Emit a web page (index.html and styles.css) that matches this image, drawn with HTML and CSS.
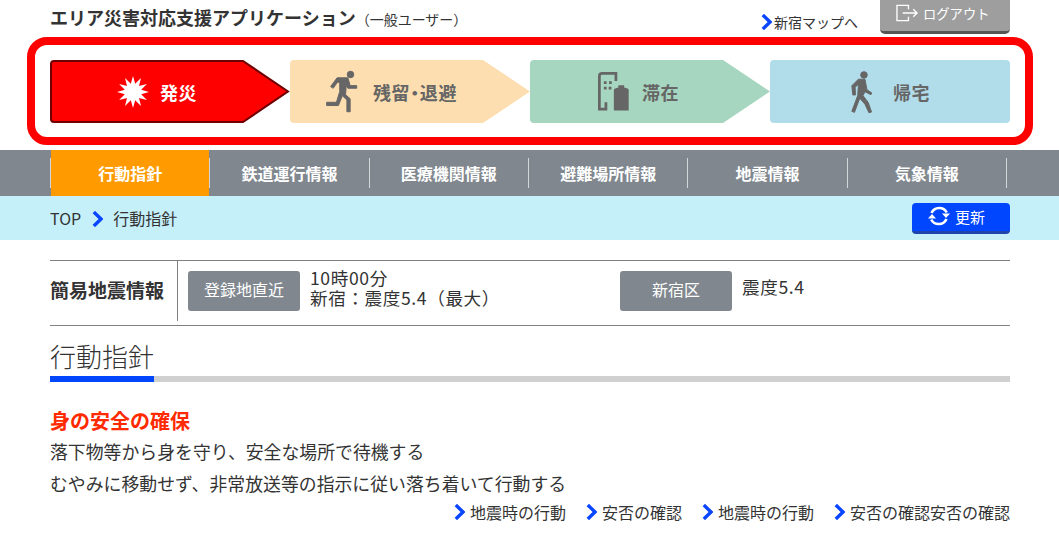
FILE: index.html
```html
<!DOCTYPE html>
<html lang="ja">
<head>
<meta charset="utf-8">
<title>エリア災害対応支援アプリケーション</title>
<link rel="stylesheet" href="styles.css">
</head>
<body>
<svg class="defs" width="0" height="0" aria-hidden="true">
  <symbol id="chev" viewBox="0 0 11 16"><path d="M1.800 1 9 8 1.800 15" fill="none" stroke="#0a46ff" stroke-width="3.400"/></symbol>
</svg>

<header class="top">
  <h1 class="title">エリア災害対応支援アプリケーション<small class="role">（一般ユーザー）</small></h1>
  <a class="map-link"><svg class="chev"><use href="#chev"/></svg>新宿マップへ</a>
  <a class="logout">
    <svg class="logout-icon" viewBox="0 0 24 18" fill="none" stroke="#fff" stroke-width="1.400"><path d="M13 5V1H1v16h12v-4"/><path d="M7 9h15M18 5l4 4-4 4"/></svg>
    ログアウト
  </a>
</header>

<section class="phases">
  <div class="phase phase-1">
    <svg class="shape" viewBox="0 0 240 63"><path d="M4 1H193L238 31.500 193 62H4Q1 62 1 59V4Q1 1 4 1Z" fill="#ff0000" stroke="#6e0000" stroke-width="2"/></svg>
    <svg class="ic-burst" viewBox="-16 -16 32 32"><polygon fill="#fff" points="16,0 8.200,2.200 13.900,8 6,6 8,13.900 2.200,8.200 0,16 -2.200,8.200 -8,13.900 -6,6 -13.900,8 -8.200,2.200 -16,0 -8.200,-2.200 -13.900,-8 -6,-6 -8,-13.900 -2.200,-8.200 0,-16 2.200,-8.200 8,-13.900 6,-6 13.900,-8 8.200,-2.200"/></svg>
    <span class="phase-name on">発災</span>
  </div>
  <div class="phase phase-2">
    <svg class="shape" viewBox="0 0 240 63"><path d="M4 0H193L240 31.500 193 63H4Q0 63 0 59V4Q0 0 4 0Z" fill="#fddeb0"/></svg>
    <svg class="ic-run" viewBox="18 26 98 128" fill="#666" stroke="#666" stroke-width="3"><circle cx="93" cy="38" r="10"/><path d="M52 48H85L92 72H112V80H85L80 72 78 100 92 112V152H82V116L68 103 56 133H20V123H50L60 90V62H53L40 80 32 75Z"/></svg>
    <span class="phase-name">残留・退避</span>
  </div>
  <div class="phase phase-3">
    <svg class="shape" viewBox="0 0 240 63"><path d="M4 0H193L240 31.500 193 63H4Q0 63 0 59V4Q0 0 4 0Z" fill="#a6d6bf"/></svg>
    <svg class="ic-bldg" viewBox="24 40 90 113" fill="#666"><path d="M36 40H80V66H72V48H36Q32 48 32 52V144H43V128H51V152H24V52Q24 40 36 40Z"/><path d="M70 152V92Q70 88 76 87L83 85V78H100V85L107 87Q113 88 113 92V152Z"/><path d="M41 67h8v8h-8zM56 67h8v8h-8zM41 83h8v8h-8zM55 83h8v8h-8z"/></svg>
    <span class="phase-name">滞在</span>
  </div>
  <div class="phase phase-4">
    <svg class="shape" viewBox="0 0 240 63"><rect width="240" height="63" rx="4" fill="#b1dcea"/></svg>
    <svg class="ic-walk" viewBox="36 29 66 128" fill="#666" stroke="#666" stroke-width="3"><circle cx="75" cy="41" r="10"/><path d="M58 54H78L84 86 99 96 96 101 78 92 72 104 88 125 98 154 90 156 78 130 62 112 46 155 38 152 56 104 58 70 48 78 49 102 41 102 38 74Z"/></svg>
    <span class="phase-name">帰宅</span>
  </div>
</section>

<nav class="gnav">
  <ul class="gnav-list">
    <li class="gnav-item"><a class="gnav-link current">行動指針</a><span class="sep"></span></li>
    <li class="gnav-item"><a class="gnav-link">鉄道運行情報</a><span class="sep"></span></li>
    <li class="gnav-item"><a class="gnav-link">医療機関情報</a><span class="sep"></span></li>
    <li class="gnav-item"><a class="gnav-link">避難場所情報</a><span class="sep"></span></li>
    <li class="gnav-item"><a class="gnav-link">地震情報</a><span class="sep"></span></li>
    <li class="gnav-item"><a class="gnav-link">気象情報</a><span class="sep"></span></li>
  </ul>
</nav>

<div class="crumbs">
  <a class="crumb">TOP</a>
  <svg class="chev crumb-chev"><use href="#chev"/></svg>
  <span class="crumb">行動指針</span>
  <a class="refresh">
    <svg class="refresh-icon" viewBox="0 0 24 24" fill="none" stroke="#fff" stroke-width="2.600"><path d="M4.500 9A8.500 8.500 0 0 1 19.800 8.500"/><path d="M19.500 15A8.500 8.500 0 0 1 4.200 15.500"/><path d="M15 9.500h8l-4 4.500z" fill="#fff" stroke="none"/><path d="M1 14.500h8L5 10z" fill="#fff" stroke="none"/></svg>
    更新
  </a>
</div>

<main class="main">
  <section class="quake">
    <h2 class="quake-label">簡易地震情報</h2>
    <div class="quake-cell first">
      <span class="tag">登録地直近</span>
      <p class="quake-text">10時00分<br>新宿：震度5.4（最大）</p>
    </div>
    <div class="quake-cell">
      <span class="tag">新宿区</span>
      <p class="quake-text single">震度5.4</p>
    </div>
  </section>

  <h2 class="heading"><span class="heading-text">行動指針</span></h2>

  <h3 class="alert">身の安全の確保</h3>
  <p class="body-line">落下物等から身を守り、安全な場所で待機する</p>
  <p class="body-line">むやみに移動せず、非常放送等の指示に従い落ち着いて行動する</p>

  <div class="links">
    <a class="link"><svg class="chev"><use href="#chev"/></svg>地震時の行動</a>
    <a class="link"><svg class="chev"><use href="#chev"/></svg>安否の確認</a>
    <a class="link"><svg class="chev"><use href="#chev"/></svg>地震時の行動</a>
    <a class="link"><svg class="chev"><use href="#chev"/></svg>安否の確認安否の確認</a>
  </div>
</main>
</body>
</html>
```

FILE: styles.css
```css
* { box-sizing: border-box; }
html, body { margin: 0; padding: 0; }
body {
  width: 1059px;
  height: 533px;
  overflow: hidden;
  background: #fff;
  color: #333;
  font-family: "Noto Sans CJK JP", "Noto Sans", sans-serif;
  font-size: 16px;
}
h1, h2, h3, p, ul { margin: 0; padding: 0; }
ul { list-style: none; }
.defs { display: block; height: 0; }
.chev { width: 11px; height: 16px; flex: none; }

/* header */
.top {
  display: flex;
  align-items: flex-start;
  height: 37px;
  margin: 0 49px 0 50px;
}
.title {
  flex: 1;
  font-size: 18px;
  font-weight: 700;
  line-height: 34px;
  white-space: nowrap;
}
.role {
  font-size: 14px;
  font-weight: 400;
}
.map-link {
  display: flex;
  align-items: center;
  gap: 2px;
  margin: 12px 22px 0 0;
  font-size: 14px;
  line-height: 20px;
}
.logout {
  display: flex;
  align-items: center;
  gap: 4px;
  width: 130px;
  height: 34px;
  padding: 0 0 5px 16px;
  background: #9e9e9e;
  border-bottom: 3px solid #555;
  border-radius: 0 0 5px 5px;
  color: #fff;
  font-size: 13.300px;
}
.logout-icon { width: 23px; height: 18px; }

/* phases */
.phases {
  display: flex;
  width: 1006px;
  height: 108px;
  margin-left: 27px;
  padding: 15px;
  border: 8px solid #f00;
  border-radius: 20px;
}
.phase {
  position: relative;
  flex: 0 0 240px;
  height: 63px;
  display: flex;
  align-items: center;
}
.shape { position: absolute; inset: 0; width: 240px; height: 63px; }
.phase > :not(.shape) { position: relative; }
.phase-1 { padding-left: 67px; gap: 11px; }
.phase-2 { padding-left: 36px; gap: 15px; }
.phase-3 { padding-left: 68px; gap: 13px; }
.phase-4 { padding-left: 81px; gap: 20px; }
.ic-burst { width: 32px; height: 32px; }
.ic-run { width: 32px; height: 43px; }
.ic-bldg { width: 31px; height: 39px; }
.ic-walk { width: 22px; height: 42px; }
.phase-name {
  color: #666;
  font-size: 18px;
  font-weight: 700;
  font-feature-settings: "palt";
  letter-spacing: .6px;
  white-space: nowrap;
}
.phase-name.on { color: #fff; }

/* global nav */
.gnav {
  margin-top: 5px;
  height: 46px;
  padding-left: 50px;
  background: #80878e;
}
.gnav-list {
  display: grid;
  grid-template-columns: 1px repeat(6, 1fr);
  width: 957px;
  height: 46px;
}
.gnav-list::before {
  content: "";
  margin: 8px 0;
  background: #d4d7da;
}
.gnav-item { display: flex; }
.gnav-link {
  flex: 1;
  display: flex;
  align-items: center;
  justify-content: center;
  color: #fff;
  font-size: 16px;
  font-weight: 700;
}
.gnav-link.current { background: #ff9b00; }
.sep { width: 1px; margin: 8px 0; background: #d4d7da; }

/* breadcrumb */
.crumbs {
  display: flex;
  align-items: center;
  height: 44px;
  padding: 0 49px 0 50px;
  background: #c5f0fa;
}
.crumb { font-size: 16px; }
.crumb-chev { margin: 2px 10px 0 11px; }
.refresh {
  display: flex;
  align-items: center;
  gap: 4px;
  width: 98px;
  height: 31px;
  margin-left: auto;
  padding: 0 0 1px 15px;
  background: #0046ff;
  border-bottom: 3px solid #1f45ad;
  border-radius: 4px;
  color: #fff;
  font-size: 15px;
}
.refresh-icon { width: 24px; height: 24px; }

/* main */
.main { margin: 20px 49px 0 50px; }
.quake {
  display: grid;
  grid-template-columns: 128px 442px 1fr;
  height: 66px;
  border-top: 1px solid #808080;
  border-bottom: 1px solid #808080;
}
.quake-label {
  height: 60px;
  border-right: 1px solid #808080;
  font-size: 19px;
  font-weight: 700;
  line-height: 58px;
  white-space: nowrap;
}
.quake-cell {
  display: flex;
  align-items: flex-start;
  gap: 10px;
  padding-top: 10px;
}
.quake-cell.first { padding-left: 10px; }
.tag {
  flex: none;
  width: 112px;
  height: 40px;
  background: #80878e;
  border-radius: 3px;
  color: #fff;
  font-size: 16px;
  line-height: 37px;
  text-align: center;
}
.quake-text {
  margin-top: -3px;
  font-size: 17.600px;
  letter-spacing: .6px;
  line-height: 20px;
  white-space: nowrap;
}
.quake-text.single { margin-top: 6px; }

.heading {
  margin-top: 10px;
  border-bottom: 6px solid #d0d0d0;
  font-size: 26px;
  font-weight: 300;
  line-height: 40px;
  height: 46px;
}
.heading-text {
  display: inline-block;
  height: 46px;
  border-bottom: 6px solid #0046ff;
}
.alert {
  margin-top: 25px;
  color: #ff2a00;
  font-size: 20px;
  font-weight: 700;
  line-height: 28px;
}
.body-line {
  font-size: 17.870px;
  line-height: 32px;
  white-space: nowrap;
}
.links {
  display: flex;
  justify-content: flex-end;
  gap: 20px;
  font-size: 16px;
  line-height: 26px;
}
.link { display: flex; align-items: center; gap: 5px; }
```
